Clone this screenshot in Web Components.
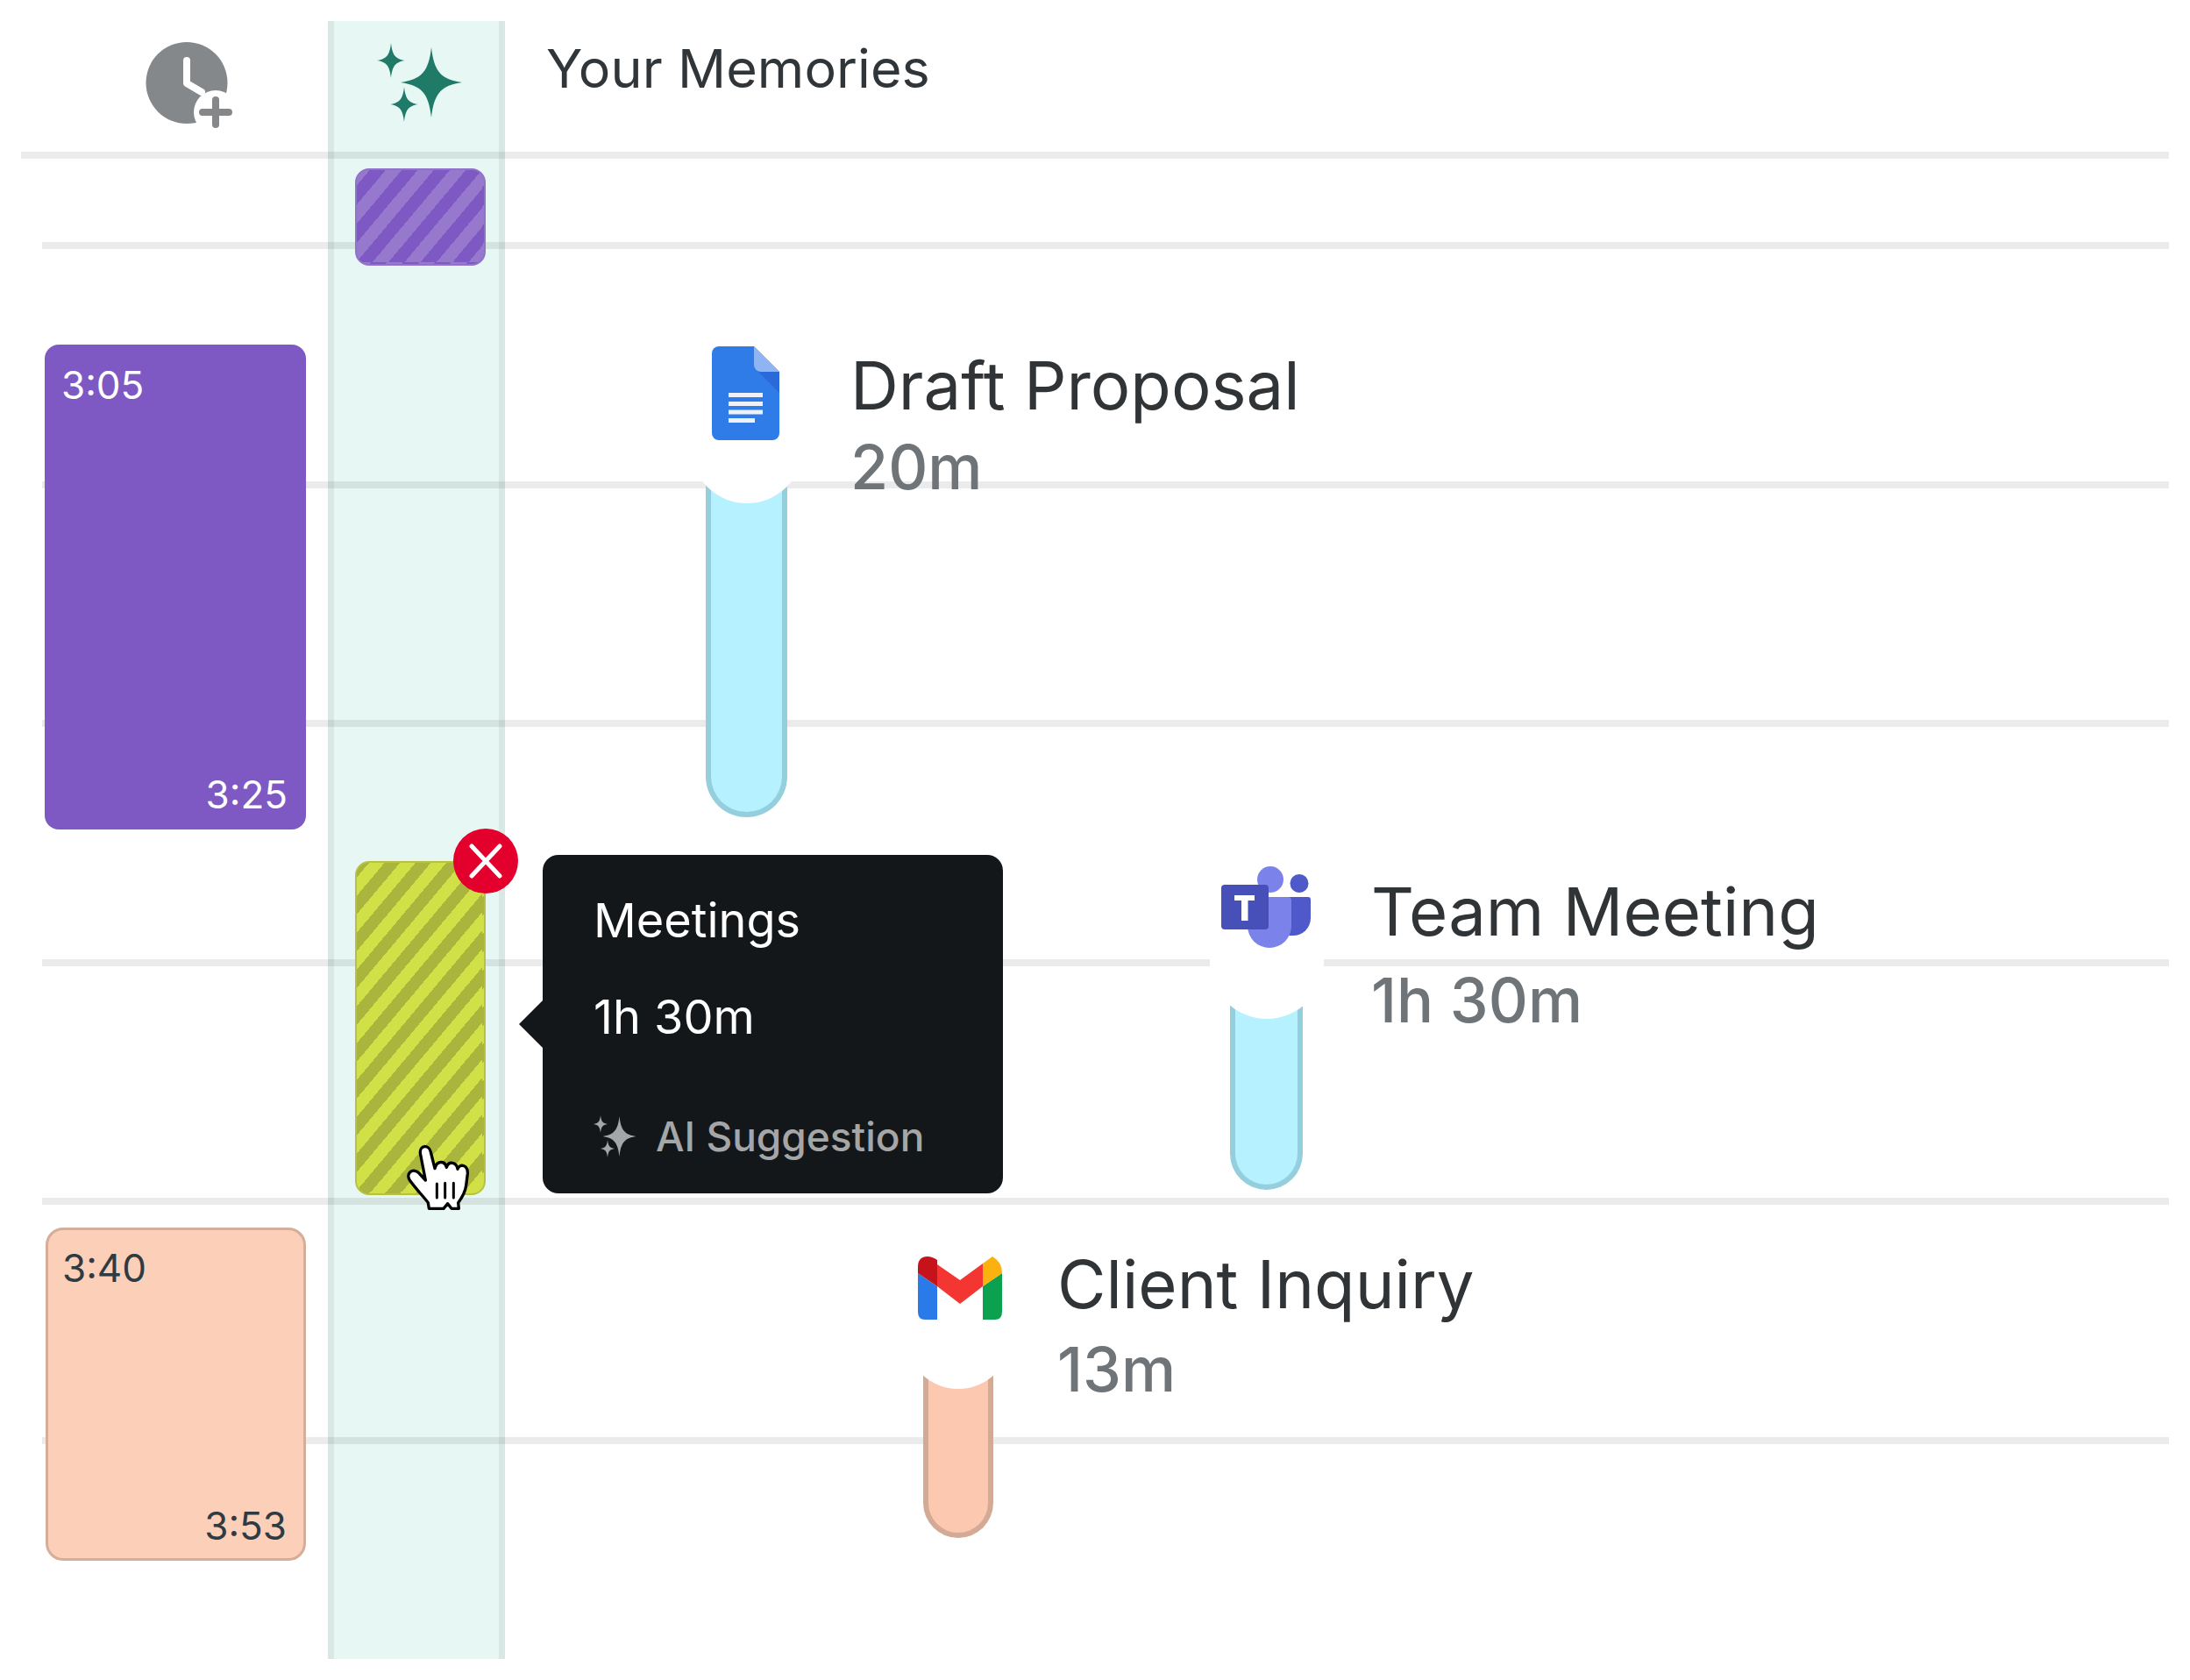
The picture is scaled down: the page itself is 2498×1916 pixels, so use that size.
<!DOCTYPE html>
<html lang="en">
<head>
<meta charset="utf-8">
<title>Your Memories</title>
<style>
html,body{margin:0;padding:0;background:#fff}
body{font-family:Inter,"Noto Sans",sans-serif}
</style>
</head>
<body>
<timeline-board>
  <header-row slot="header">
    <clock-add-icon slot="a"></clock-add-icon>
    <sparkle-icon slot="b"></sparkle-icon>
    <span slot="c">Your Memories</span>
  </header-row>

  <time-rule></time-rule>
  <time-rule inset></time-rule>
  <time-rule inset></time-rule>
  <time-rule inset></time-rule>
  <time-rule inset></time-rule>
  <time-rule inset></time-rule>
  <time-rule inset></time-rule>

  <hatch-block slot="items" tone="purple" style="--x:405px;--y:192px;--w:149px;--h:111px"></hatch-block>
  <time-block slot="items" tone="purple" style="--x:51px;--y:393px;--w:298px;--h:553px">
    <span slot="start">3:05</span><span slot="end">3:25</span>
  </time-block>
  <time-block slot="items" tone="peach" style="--x:52px;--y:1400px;--w:297px;--h:380px">
    <span slot="start">3:40</span><span slot="end">3:53</span>
  </time-block>

  <memory-item slot="items" tone="blue" style="--x:805px;--y:490px;--w:93px;--h:442px;--mask:128px;--mask-top:-44px;--label-x:72px;--label-y:-98px;--title-lh:94px;--icon-x:7px;--icon-y:-95px">
    <svg slot="icon" width="77" height="107" viewBox="0 0 77 107">
      <path fill="#2f7be8" d="M8 0H48L77 29V99a8 8 0 0 1-8 8H8a8 8 0 0 1-8-8V8a8 8 0 0 1 8-8Z"/>
      <path fill="#2a69d8" d="M51 27 77 53V29Z"/>
      <path fill="#8fb4f3" d="M48 0 77 29H56a8 8 0 0 1-8-8Z"/>
      <path fill="#eef2f8" d="M19 53H58V58H19ZM19 63H58V68H19ZM19 72.500H58V77.500H19ZM19 82H49V87H19Z"/>
    </svg>
    <span slot="title">Draft Proposal</span><span slot="sub">20m</span>
  </memory-item>

  <memory-item slot="items" tone="blue" style="--x:1403px;--y:1082px;--w:83px;--h:275px;--mask:130px;--mask-top:-50px;--label-x:78px;--label-y:-93px;--title-lh:101px;--icon-x:-10px;--icon-y:-94px">
    <svg slot="icon" width="102" height="94" viewBox="0 0 102 94">
      <circle cx="56" cy="15" r="15" fill="#7b83eb"/>
      <circle cx="89" cy="19.500" r="10.500" fill="#5059c9"/>
      <path fill="#5059c9" d="M70 35H99a3 3 0 0 1 3 3V59a20 20 0 0 1-20 20H70Z"/>
      <path fill="#7b83eb" d="M34 35H76a4 4 0 0 1 4 4V68a25 25 0 0 1-50 0V39a4 4 0 0 1 4-4Z"/>
      <rect x="0" y="21" width="54" height="51" rx="4" fill="#4650b8"/>
      <path fill="#fff" d="M15 33H38V39H30.500V62H23V39H15Z"/>
    </svg>
    <span slot="title">Team Meeting</span><span slot="sub">1h 30m</span>
  </memory-item>

  <memory-item slot="items" tone="peach" style="--x:1053px;--y:1507px;--w:80px;--h:247px;--mask:120px;--mask-top:-43px;--label-x:73px;--label-y:-91px;--title-lh:97px;--icon-x:-6px;--icon-y:-74px">
    <svg slot="icon" width="96" height="72" viewBox="0 0 96 72">
      <path fill="#2a7ae9" d="M0 19 22 34V72H8Q0 72 0 63Z"/>
      <path fill="#0ca14f" d="M96 19 74 34V72H88Q96 72 96 63Z"/>
      <path fill="#c5121b" d="M0 19V12Q0 0 11 0 16 0 22 4V34Z"/>
      <path fill="#fbb20e" d="M74 8 85 0Q96 6 96 19L74 34Z"/>
      <path fill="#f33631" d="M22 9 48 27 74 8V34L48 54 22 34Z"/>
    </svg>
    <span slot="title">Client Inquiry</span><span slot="sub">13m</span>
  </memory-item>

  <hatch-block slot="items" tone="yellow" style="--x:405px;--y:982px;--w:149px;--h:381px">
    <close-badge></close-badge>
  </hatch-block>

  <hint-tooltip slot="items" style="--x:619px;--y:975px;--w:525px;--h:386px">
    <span slot="title">Meetings</span>
    <span slot="time">1h 30m</span>
    <span slot="note">AI Suggestion</span>
  </hint-tooltip>

  <hand-cursor slot="items" style="--x:420px;--y:1260px"></hand-cursor>
</timeline-board>

<script>
const define = (name, css, html, extra) => {
  const tpl = document.createElement('template');
  tpl.innerHTML = `<style>${css}</style>${html}`;
  customElements.define(name, class extends HTMLElement {
    constructor() {
      super();
      this.attachShadow({ mode: 'open' }).appendChild(tpl.content.cloneNode(true));
    }
  });
};

const STAR = 'M0-1C.09-.32.3-.09 1 0 .3.09.09.32 0 1-.09.32-.3.09-1 0-.3-.09-.09-.32 0-1Z';

define('timeline-board', `
  :host{display:grid;width:2498px;height:1916px;background:#fff;overflow:hidden;color:#2f3538;
    font-family:Inter,"Noto Sans",sans-serif}
  .layer{grid-area:1/1;min-width:0;min-height:0}
  .stripe-layer{padding:24px 0 24px 374px}
  .stripe{box-sizing:border-box;width:202px;height:100%;background:#e6f7f4;
    border-left:7px solid #d9e8e5;border-right:7px solid #d9e8e5}
  .rules{display:flex;flex-direction:column;padding:173px 24px 0 24px;box-sizing:border-box}
  .rules ::slotted(time-rule:nth-child(n)){margin-top:0}
  .canvas{position:relative}
`, `
  <div class="layer stripe-layer"><div class="stripe"></div></div>
  <div class="layer rules"><slot></slot></div>
  <div class="layer"><slot name="header"></slot></div>
  <div class="layer canvas"><slot name="items"></slot></div>
`);

define('time-rule', `
  :host{display:block;height:8px;background:rgba(0,0,0,.08);margin-bottom:264.5px}
  :host([inset]){margin-left:24px}
  :host(:first-of-type){margin-bottom:95px}
`, ``);

define('header-row', `
  :host{display:grid;grid-template-columns:374px 202px 1fr;height:173px;font-size:61px;color:#2f3538}
  .cell{display:flex;align-items:center}
  .a{padding:48px 0 0 166px;align-items:flex-start}
  .b{padding:46px 0 0 56px;align-items:flex-start}
  .c{padding:0 0 18px 47px;letter-spacing:.1px}
`, `
  <div class="cell a"><slot name="a"></slot></div>
  <div class="cell b"><slot name="b"></slot></div>
  <div class="cell c"><slot name="c"></slot></div>
`);

define('clock-add-icon', `:host{display:block;width:104px;height:110px}svg{display:block}`, `
  <svg width="104" height="110" viewBox="166 48 104 110">
    <circle cx="213" cy="94.500" r="46.500" fill="#85888b"/>
    <path d="M213 69V95L230 105" fill="none" stroke="#fff" stroke-width="8" stroke-linecap="round" stroke-linejoin="round"/>
    <circle cx="246" cy="128" r="25" fill="#fff"/>
    <path d="M246 114V142M231 128H261" fill="none" stroke="#85888b" stroke-width="8" stroke-linecap="round"/>
  </svg>`);

define('sparkle-icon', `:host{display:block;width:96px;height:96px}svg{display:block}`, `
  <svg width="96" height="96" viewBox="424 46 96 96" overflow="visible" fill="#1f7a68">
    <path transform="translate(486 94) scale(35 40)" d="${STAR}"/>
    <path transform="translate(440 69) scale(16 20)" d="${STAR}"/>
    <path transform="translate(455 119) scale(16 20)" d="${STAR}"/>
  </svg>`);

define('hatch-block', `
  :host{position:absolute;left:var(--x);top:var(--y);width:var(--w);height:var(--h);box-sizing:border-box;
    border-radius:16px;border:2px solid var(--edge)}
  :host([tone=purple]){--edge:#8f73c9;background:repeating-linear-gradient(130deg,#9679cc 0 14px,#7e58c3 14px 28px) -2px -2px}
  :host([tone=yellow]){--edge:#b7c244;background:repeating-linear-gradient(130deg,#a9b53d 0 13.500px,#d1e047 13.500px 27px) -2px -2px}
`, `<slot></slot>`);

define('close-badge', `
  :host{position:absolute;right:-39px;top:-39px;width:74px;height:74px;border-radius:50%;background:#e4002d;
    display:flex;align-items:center;justify-content:center}
  svg{display:block}
`, `<svg width="40" height="40" viewBox="0 0 40 40"><path d="M4 3 36 37M36 3 4 37" stroke="#fff" stroke-width="5" stroke-linecap="round"/></svg>`);

define('time-block', `
  :host{position:absolute;left:var(--x);top:var(--y);width:var(--w);height:var(--h);box-sizing:border-box;
    display:flex;flex-direction:column;justify-content:space-between;font-size:44px;line-height:54px;
    padding:19px 21px 13px 19px;border-radius:16px}
  :host([tone=purple]){background:#7e58c3;color:#fff}
  :host([tone=peach]){background:#fccfb9;color:#2f3b42;border:3px solid #d5ad99;padding:16px 19px 10px 16px;border-radius:20px}
  .end{align-self:flex-end}
`, `<div><slot name="start"></slot></div><div class="end"><slot name="end"></slot></div>`);

define('memory-item', `
  :host{position:absolute;left:var(--x);top:var(--y);display:flex;align-items:flex-start;height:var(--h)}
  :host([tone=blue]){--fill:#b6f1ff;--edge:#95cfdd}
  :host([tone=peach]){--fill:#fcc8b0;--edge:#d2aa96}
  .col{position:relative;flex:none;width:var(--w);height:var(--h)}
  .tube{box-sizing:border-box;width:100%;height:100%;background:var(--fill);border:6px solid var(--edge);border-top:0;
    border-radius:0 0 calc(var(--w) / 2) calc(var(--w) / 2)}
  .mask{position:absolute;left:50%;top:var(--mask-top);width:var(--mask);height:var(--mask);margin-left:calc(var(--mask) / -2);
    border-radius:50%;background:#fff}
  .icon{position:absolute;left:var(--icon-x);top:var(--icon-y);line-height:0}
  .label{margin:var(--label-y) 0 0 var(--label-x);white-space:nowrap}
  .title{font-size:76px;line-height:var(--title-lh);color:#303436}
  .sub{font-size:70px;line-height:var(--title-lh);color:#6f7478;font-weight:500}
`, `
  <div class="col"><div class="tube"></div><div class="mask"></div><div class="icon"><slot name="icon"></slot></div></div>
  <div class="label"><div class="title"><slot name="title"></slot></div><div class="sub"><slot name="sub"></slot></div></div>
`);

define('hint-tooltip', `
  :host{position:absolute;left:var(--x);top:var(--y);width:var(--w);height:var(--h);box-sizing:border-box;
    background:#14171a;border-radius:18px;color:#fff;padding:40px 0 35px 58px;display:flex;flex-direction:column;
    font-size:54px;line-height:70px}
  :host::before{content:"";position:absolute;left:-27px;top:165px;width:28px;height:56px;background:#14171a;
    clip-path:polygon(100% 0,0 50%,100% 100%)}
  .time{margin-top:40px}
  .note{margin-top:auto;display:flex;align-items:center;gap:21px;font-size:46px;line-height:60px;color:#a5a6a8;font-weight:500}
  svg{display:block;flex:none}
`, `
  <div><slot name="title"></slot></div>
  <div class="time"><slot name="time"></slot></div>
  <div class="note">
    <svg width="50" height="48" viewBox="677 1272 50 48" fill="#a5a6a8">
      <path transform="translate(706.500 1296) scale(19 23)" d="${STAR}"/>
      <path transform="translate(685 1282) scale(8 10)" d="${STAR}"/>
      <path transform="translate(693 1310) scale(8 10)" d="${STAR}"/>
    </svg>
    <slot name="note"></slot>
  </div>
`);

define('hand-cursor', `
  :host{position:absolute;left:var(--x);top:var(--y);width:160px;height:140px}
  svg{display:block}
`, `
  <svg width="160" height="140" viewBox="0 0 480 420">
    <path fill="#fff" stroke="#000" stroke-width="10" stroke-linejoin="round" stroke-linecap="round"
      d="M178 165C176 138 208 134 214 162L228 218C234 190 262 190 268 214 274 192 302 194 306 220 312 200 342 204 340 236L335 276C332 300 322 316 308 335L310 355H285L272 338 258 355H208L205 335C190 315 165 290 142 258 128 236 150 214 172 232L196 258Z"/>
    <path fill="none" stroke="#000" stroke-width="9" stroke-linecap="round" d="M235 270V318M263 268V318M292 268V318"/>
  </svg>`);
</script>
</body>
</html>
